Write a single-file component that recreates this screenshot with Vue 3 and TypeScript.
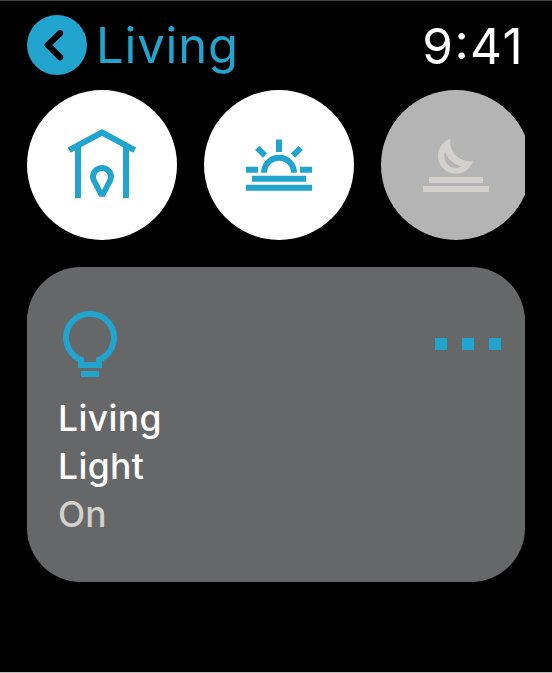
<script setup lang="ts">
import { ref } from 'vue'

type SceneIcon = 'home' | 'sunrise' | 'night'

interface Scene {
  id: number
  icon: SceneIcon
  active: boolean
}

const room = 'Living'
const time = '9:41'
const scenes = ref<Scene[]>([
  { id: 1, icon: 'home', active: true },
  { id: 2, icon: 'sunrise', active: true },
  { id: 3, icon: 'night', active: false },
])
const device = { nameLines: ['Living', 'Light'], status: 'On' }
</script>

<template>
  <main class="watch">
    <header class="header">
      <button class="back">
        <svg viewBox="0 0 60 60" width="60" height="60">
          <path d="M33 18.2 20.8 30 33 42.2" fill="none" stroke="#000" stroke-width="6.2" stroke-linecap="round" stroke-linejoin="round" />
        </svg>
      </button>
      <h1 class="title">{{ room }}</h1>
      <span class="time">{{ time }}</span>
    </header>

    <section class="scenes">
      <button v-for="scene in scenes" :key="scene.id" class="scene" :class="{ inactive: !scene.active }">
        <svg v-if="scene.icon === 'home'" class="icon" viewBox="0 0 72 72">
          <path d="M3.2 21.2 36 3.5 68.8 21.2" fill="none" stroke="currentColor" stroke-width="6" />
          <path d="M9 17h6v52.2H9zM57 17h6v52.2h-6z" />
          <path fill-rule="evenodd" d="M33.2 67.7 25.2 52.6C24.4 51 24 49.6 24 48a12 12 0 0 1 24 0c0 1.6-.4 3-1.2 4.6L38.8 67.7ZM36 61 41 51.3C41.7 50 42 49 42 48a6 6 0 0 0-12 0c0 1 .3 2 1 3.3Z" />
        </svg>
        <svg v-else-if="scene.icon === 'sunrise'" class="icon" viewBox="0 0 72 72">
          <path d="M33 10.5h6V23h-6zM3 37.7h12v6H3zM57 37.7h12v6H57z" />
          <path d="M14.2 18.8 22 26.6M57.8 18.8 50 26.6" fill="none" stroke="currentColor" stroke-width="6" />
          <path d="M18 43.7a18 18 0 0 1 36 0h-6a12 12 0 0 0-24 0z" />
          <path d="M9 46.7h54v6H9zM3 55.7h66v6H3z" />
        </svg>
        <svg v-else class="icon" viewBox="0 0 72 72">
          <path fill-rule="evenodd" d="M30.5 9.6A18 18 0 1 0 53 32.3C42 33.5 28.5 25.5 30.5 9.6ZM25 22C24 25 24 28 25 31C27.5 38 35 41 41.3 37.5C33.5 35.5 27 29.5 25 22Z" />
          <path d="M9 48h54v6H9zM3 57h66v6H3z" />
        </svg>
      </button>
    </section>

    <section class="card">
      <div class="card-top">
        <svg class="icon" viewBox="0 0 72 72">
          <path fill-rule="evenodd" d="M24 63v-6.1A27 27 0 1 1 48 56.9V63ZM30 57V52.8A21 21 0 1 1 42 52.8V57Z" />
          <path d="M27 66h18v6H27z" />
        </svg>
        <button class="more"><i></i><i></i><i></i></button>
      </div>
      <div class="label">
        <span v-for="line in device.nameLines" :key="line" class="name">{{ line }}</span>
        <span class="status">{{ device.status }}</span>
      </div>
    </section>
  </main>
</template>

<style>
body {
  margin: 0;
  background: #000;
}
</style>

<style scoped>
.watch {
  box-sizing: border-box;
  width: 552px;
  height: 673px;
  padding: 14px 27px 0;
  overflow: hidden;
  background: #000;
  border-top: 1px solid #444;
  border-bottom: 1px solid #bdbdbd;
  font-family: Inter, "Liberation Sans", sans-serif;
}
button {
  padding: 0;
  border: 0;
  background: none;
}
svg {
  display: block;
}
.header {
  display: flex;
  align-items: center;
  height: 60px;
}
.back {
  flex: none;
  width: 60px;
  height: 60px;
  border-radius: 50%;
  background: #21a4ce;
}
.title {
  margin: 0 0 0 9px;
  padding-top: 2px;
  color: #21a4ce;
  font-size: 49px;
  font-weight: 400;
  line-height: 60px;
  letter-spacing: 0.8px;
}
.time {
  margin-left: auto;
  padding: 1px 1px 0 0;
  color: #fff;
  font-size: 49.5px;
  line-height: 60px;
  letter-spacing: 1.4px;
  font-feature-settings: "calt" 1;
}
.scenes {
  display: flex;
  gap: 27px;
  margin-top: 15px;
  overflow: hidden;
}
.scene {
  display: flex;
  flex: none;
  align-items: center;
  justify-content: center;
  width: 150px;
  height: 150px;
  border-radius: 50%;
  background: #fff;
  color: #21a4ce;
}
.scene.inactive {
  background: #b4b4b4;
  color: #d4d0cb;
}
.icon {
  width: 72px;
  height: 72px;
  fill: currentColor;
}
.card {
  box-sizing: border-box;
  height: 315px;
  margin-top: 27px;
  padding: 38px 24px 0 27px;
  border-radius: 54px;
  background: #666769;
}
.card-top {
  display: flex;
  align-items: center;
  justify-content: space-between;
  color: #21a4ce;
}
.more {
  display: flex;
  gap: 15px;
  padding-top: 5px;
}
.more i {
  width: 12px;
  height: 12px;
  background: #21a4ce;
}
.label {
  display: flex;
  flex-direction: column;
  margin: 18px 0 0 4px;
  color: #fff;
  font-size: 35.5px;
  font-weight: 450;
  line-height: 48px;
}
.name {
  letter-spacing: 0.35px;
}
.status {
  color: #d4d0cb;
}
</style>
